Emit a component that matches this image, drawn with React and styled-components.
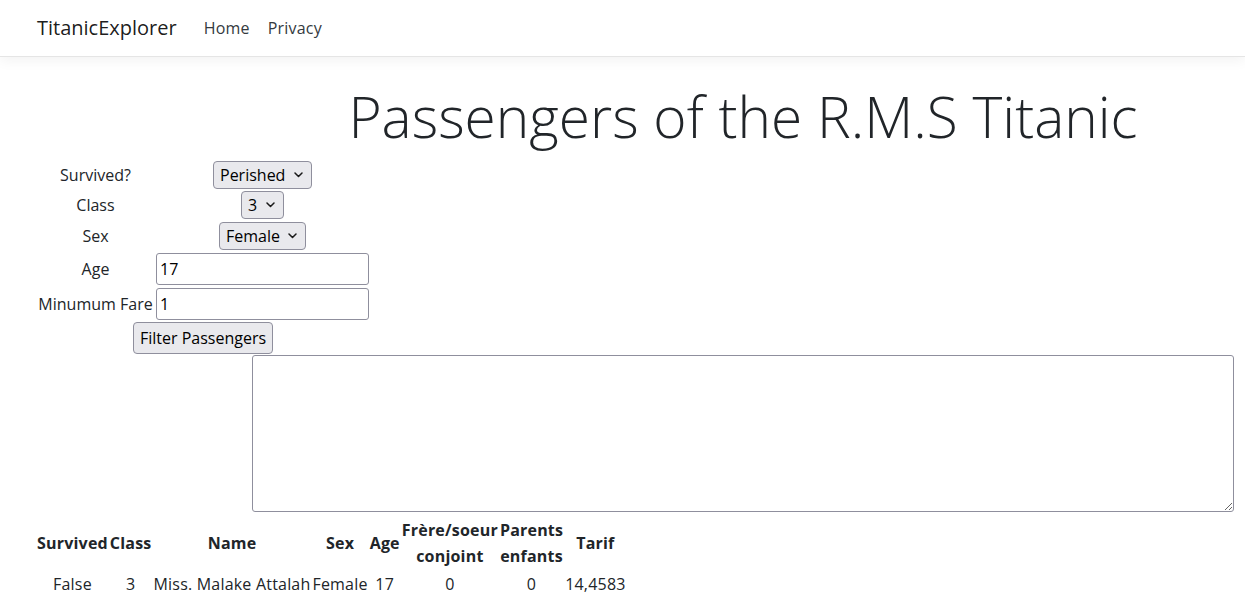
import React from 'react'
import styled, { createGlobalStyle } from 'styled-components'

const GlobalStyle = createGlobalStyle`
  html, body {
    margin: 0;
    padding: 0;
    background: #fff;
  }
  body {
    font-family: "Open Sans", "Noto Sans", sans-serif;
    font-size: 16px;
    line-height: 1.5;
    color: #212529;
  }
`

const Navbar = styled.nav`
  display: flex;
  align-items: center;
  height: 56px;
  padding-left: 37px;
  background: #fff;
  border-bottom: 1px solid #e5e5e5;
  box-shadow: 0 4px 12px rgba(0, 0, 0, 0.05);
`

const Brand = styled.a`
  font-size: 20px;
  line-height: 30px;
  color: rgba(0, 0, 0, 0.9);
  text-decoration: none;
  margin-right: 19px;
`

const NavLink = styled.a`
  padding: 8px;
  margin-right: 2px;
  color: #343a40;
  text-decoration: none;
  letter-spacing: 0.2px;
`

const Main = styled.main`
  padding: 0 11px 0 37px;
`

const Title = styled.h1`
  margin: 26px 0 0 215px;
  width: 982px;
  text-align: center;
  font-size: 56.8px;
  font-weight: 300;
  line-height: 67px;
`

const FilterGrid = styled.div`
  display: grid;
  grid-template-columns: 117px 213px;
  grid-template-rows: 31px 30px 32px 34px 35px 33px;
  column-gap: 2px;
  align-items: center;
  margin-top: 9px;
  width: 332px;
`

const Label = styled.label`
  text-align: center;
  white-space: nowrap;
`

const Cell = styled.div`
  display: flex;
  justify-content: ${p => (p.$stretch ? 'stretch' : 'center')};
`

const SelectWrap = styled.span`
  position: relative;
  display: inline-flex;

  svg {
    position: absolute;
    right: 9px;
    top: 11px;
    pointer-events: none;
  }
`

const Select = styled.select`
  appearance: none;
  font: inherit;
  color: #000;
  height: 28px;
  padding: 0 25px 0 6px;
  background-color: #e9e9ed;
  border: 1px solid #8f8f9d;
  border-radius: 4px;
`

const Input = styled.input`
  font: inherit;
  color: #000;
  width: 100%;
  box-sizing: border-box;
  height: 32px;
  padding: 1px 3px;
  border: 1px solid #8f8f9d;
  border-radius: 3px;
  background: #fff;
`

const ButtonRow = styled.div`
  grid-column: 1 / 3;
  display: flex;
  justify-content: center;
`

const Button = styled.button`
  font: inherit;
  color: #000;
  height: 32px;
  padding: 1px 6px;
  background: #e9e9ed;
  border: 1px solid #8f8f9d;
  border-radius: 4px;
`

const Notes = styled.textarea`
  display: block;
  box-sizing: border-box;
  margin: 1px 0 0 215px;
  width: 982px;
  height: 157px;
  font: inherit;
  border: 1px solid #8f8f9d;
  border-radius: 3px;
`

const Results = styled.table`
  margin-top: 3px;
  border-spacing: 2px;
  margin-left: -2px;
  letter-spacing: 0.2px;

  th {
    font-weight: 700;
    line-height: 26px;
    padding: 0;
    vertical-align: middle;
  }

  td {
    text-align: center;
    padding: 1px 0;
    white-space: nowrap;
  }
`

const Chevron = () => (
  <svg width="9" height="6" viewBox="0 0 9 6" fill="none">
    <path d="M1 1l3.5 3.5L8 1" stroke="#1a1a1a" strokeWidth="1.5" strokeLinecap="round" strokeLinejoin="round" />
  </svg>
)

const Dropdown = ({ children, ...rest }) => (
  <SelectWrap>
    <Select {...rest}>{children}</Select>
    <Chevron />
  </SelectWrap>
)

const passengers = [
  {
    survived: 'False',
    pclass: 3,
    name: 'Miss. Malake Attalah',
    sex: 'Female',
    age: 17,
    sibsp: 0,
    parch: 0,
    fare: '14,4583'
  }
]

export default function App() {
  return (
    <>
      <GlobalStyle />
      <Navbar>
        <Brand href="#">TitanicExplorer</Brand>
        <NavLink href="#">Home</NavLink>
        <NavLink href="#">Privacy</NavLink>
      </Navbar>
      <Main>
        <Title>Passengers of the R.M.S Titanic</Title>
        <FilterGrid>
          <Label>Survived?</Label>
          <Cell>
            <Dropdown defaultValue="0">
              <option value="1">Survived</option>
              <option value="0">Perished</option>
            </Dropdown>
          </Cell>
          <Label>Class</Label>
          <Cell>
            <Dropdown defaultValue="3">
              <option>1</option>
              <option>2</option>
              <option>3</option>
            </Dropdown>
          </Cell>
          <Label>Sex</Label>
          <Cell>
            <Dropdown defaultValue="female">
              <option value="male">Male</option>
              <option value="female">Female</option>
            </Dropdown>
          </Cell>
          <Label>Age</Label>
          <Cell $stretch>
            <Input defaultValue="17" />
          </Cell>
          <Label>Minumum Fare</Label>
          <Cell $stretch>
            <Input defaultValue="1" />
          </Cell>
          <ButtonRow>
            <Button>Filter Passengers</Button>
          </ButtonRow>
        </FilterGrid>
        <Notes />
        <Results>
          <thead>
            <tr>
              <th>Survived</th>
              <th>Class</th>
              <th>Name</th>
              <th>Sex</th>
              <th>Age</th>
              <th>Frère/soeur<br />conjoint</th>
              <th>Parents<br />enfants</th>
              <th>Tarif</th>
            </tr>
          </thead>
          <tbody>
            {passengers.map(p => (
              <tr key={p.name}>
                <td>{p.survived}</td>
                <td>{p.pclass}</td>
                <td>{p.name}</td>
                <td>{p.sex}</td>
                <td>{p.age}</td>
                <td>{p.sibsp}</td>
                <td>{p.parch}</td>
                <td>{p.fare}</td>
              </tr>
            ))}
          </tbody>
        </Results>
      </Main>
    </>
  )
}
